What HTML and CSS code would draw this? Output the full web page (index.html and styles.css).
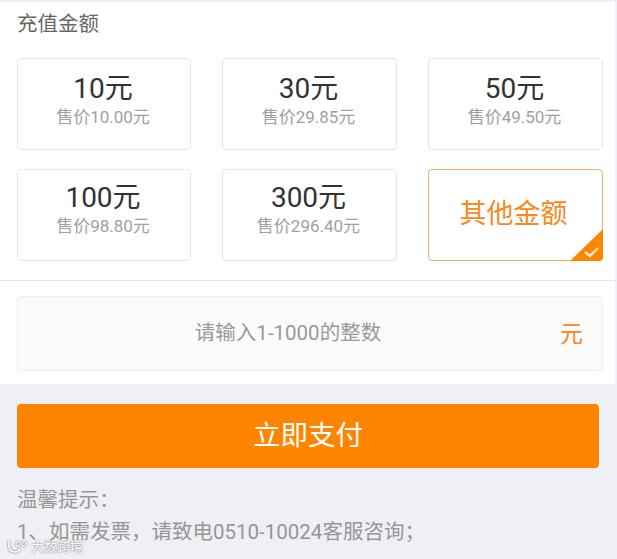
FILE: index.html
```html
<!DOCTYPE html>
<html lang="zh-CN">
<head>
    <meta charset="UTF-8">
    <meta name="viewport" content="width=device-width, initial-scale=1.0">
    <title>充值金额</title>
    <link rel="stylesheet" href="styles.css">
</head>
<body>
    <div class="page">
        <section class="amount-panel">
            <h2 class="panel-title">充值金额</h2>
            <div class="amount-grid">
                <div class="amount-card">
                    <div class="amount-value">10元</div>
                    <div class="amount-price">售价10.00元</div>
                </div>
                <div class="amount-card">
                    <div class="amount-value">30元</div>
                    <div class="amount-price">售价29.85元</div>
                </div>
                <div class="amount-card">
                    <div class="amount-value">50元</div>
                    <div class="amount-price">售价49.50元</div>
                </div>
                <div class="amount-card amount-card-low">
                    <div class="amount-value">100元</div>
                    <div class="amount-price">售价98.80元</div>
                </div>
                <div class="amount-card amount-card-low">
                    <div class="amount-value">300元</div>
                    <div class="amount-price">售价296.40元</div>
                </div>
                <div class="amount-card amount-card-active">
                    <div class="amount-other">其他金额</div>
                    <svg class="corner-check" width="33" height="32" viewBox="0 0 33 32">
                        <path d="M33 0V28a4 4 0 0 1-4 4H0Z" fill="#ff8500"/>
                        <path d="M15 23l5 4 8-8" fill="none" stroke="#fff" stroke-opacity="0.85" stroke-width="2.4"/>
                    </svg>
                </div>
            </div>
            <div class="custom-row">
                <div class="custom-input">
                    <span class="custom-hint">请输入1-1000的整数</span>
                    <span class="custom-unit">元</span>
                </div>
            </div>
        </section>
        <section class="pay-panel">
            <button class="pay-button">立即支付</button>
            <p class="tip-title">温馨提示：</p>
            <p class="tip-line">1、如需发票，请致电0510-10024客服咨询；</p>
        </section>
        <div class="watermark">
            <svg class="watermark-logo" width="22" height="14" viewBox="0 0 22 14">
                <path d="M2 1c-1 7 1 11 6 11 2 0 4-1 5-3" fill="none" stroke="#fff" stroke-width="1.6"/>
                <circle cx="11" cy="4" r="2" fill="none" stroke="#fff" stroke-width="1.2"/>
                <circle cx="17" cy="4" r="2" fill="none" stroke="#fff" stroke-width="1.2"/>
            </svg>
            <span>大数跨境</span>
        </div>
    </div>
</body>
</html>
```

FILE: styles.css
```css
* {
    box-sizing: border-box;
}
html, body {
    margin: 0;
    padding: 0;
    height: 100%;
}
body {
    font-family: Roboto, "Noto Sans CJK SC", sans-serif;
    background-color: #f0eff5;
    overflow: hidden;
}
.page {
    position: relative;
    width: 617px;
    height: 559px;
    overflow: hidden;
}
.amount-panel {
    background-color: #fff;
    border-top: 2px solid #efefef;
    border-bottom: 1px solid #ececec;
    margin-right: 2px;
    height: 385px;
}
.panel-title {
    margin: 0;
    padding: 9px 0 0 17px;
    height: 56px;
    font-size: 20.5px;
    line-height: 26px;
    font-weight: 400;
    color: #666;
}
.amount-grid {
    display: grid;
    grid-template-columns: 174px 175px 175px;
    grid-auto-rows: 92px;
    column-gap: 31px;
    row-gap: 19px;
    padding: 0 0 0 17px;
}
.amount-card {
    position: relative;
    border: 1px solid #e6e6e6;
    border-radius: 4px;
    text-align: center;
    padding: 12px 2px 0 0;
}
.amount-card-low {
    padding-top: 10px;
}
.amount-value {
    font-size: 28px;
    line-height: 36px;
    color: #333;
}
.amount-price {
    font-size: 17px;
    line-height: 20px;
    color: #a0a0a0;
}
.amount-card-active {
    border-color: #eeb062;
    padding: 24px 4px 0 0;
}
.amount-other {
    font-size: 27px;
    line-height: 40px;
    color: #f7891e;
}
.corner-check {
    position: absolute;
    right: -1px;
    bottom: -1px;
}
.custom-row {
    margin-top: 19px;
    border-top: 1px solid #e6e6e6;
    padding: 15px 0 0 17px;
}
.custom-input {
    position: relative;
    width: 586px;
    height: 75px;
    background-color: #fbfbfb;
    border: 1px solid #eee;
    border-radius: 4px;
    display: flex;
    align-items: center;
    justify-content: center;
    padding-right: 44px;
}
.custom-hint {
    font-size: 20.5px;
    line-height: 26px;
    color: #999;
    margin-top: -2px;
}
.custom-unit {
    position: absolute;
    right: 19px;
    top: 24px;
    font-size: 23px;
    line-height: 28px;
    color: #f7891e;
}
.pay-panel {
    padding: 19px 0 0 17px;
}
.pay-button {
    display: block;
    width: 582px;
    height: 64px;
    padding: 0 0 6px;
    border: none;
    border-radius: 4px;
    background-color: #ff8500;
    color: #fff;
    font-family: inherit;
    font-size: 27.5px;
}
.tip-title, .tip-line {
    margin: 0;
    font-size: 20.5px;
    line-height: 32px;
    color: #969696;
}
.tip-title {
    margin-top: 16px;
}
.watermark {
    position: absolute;
    left: 7px;
    bottom: 5px;
    display: flex;
    align-items: center;
    gap: 2px;
    font-size: 13px;
    line-height: 15px;
    color: #fff;
    text-shadow: 0 0 2px #555;
}
.watermark-logo {
    filter: drop-shadow(0 0 1px #555);
}
```
